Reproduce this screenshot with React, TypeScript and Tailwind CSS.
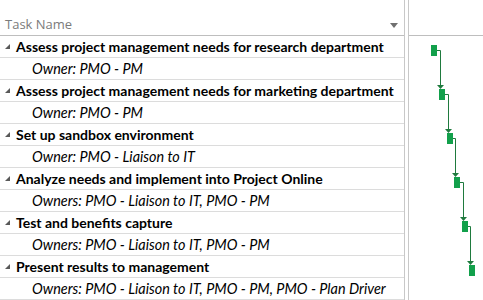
import React from 'react';

interface Task {
  name: string;
  owners: string;
}

const tasks: Task[] = [
  { name: 'Assess project management needs for research department', owners: 'Owner: PMO - PM' },
  { name: 'Assess project management needs for marketing department', owners: 'Owner: PMO - PM' },
  { name: 'Set up sandbox environment', owners: 'Owner: PMO - Liaison to IT' },
  { name: 'Analyze needs and implement into Project Online', owners: 'Owners: PMO - Liaison to IT, PMO - PM' },
  { name: 'Test and benefits capture', owners: 'Owners: PMO - Liaison to IT, PMO - PM' },
  { name: 'Present results to management', owners: 'Owners: PMO - Liaison to IT, PMO - PM, PMO - Plan Driver' },
];

// bar x positions inside the gantt pane (pane starts at x=409)
const barX = [22, 30, 38, 45, 53, 60];

function CollapseIcon() {
  return (
    <svg className="w-[5px] h-[5px] shrink-0" viewBox="0 0 5 5">
      <polygon points="5,0 5,5 0,5" fill="#595959" />
    </svg>
  );
}

function Gantt() {
  const bars = barX.map((x, i) => ({ x, y: 9 + i * 44 }));
  return (
    <svg className="block" width="74" height="264" viewBox="0 0 74 264">
      {bars.slice(0, -1).map((b, i) => {
        const next = bars[i + 1];
        const lx = next.x + 1.5;
        return (
          <g key={i}>
            <path
              d={`M${b.x + 6} ${b.y + 5.5} H${lx} V${next.y - 3}`}
              fill="none"
              stroke="#1f7a3e"
              strokeWidth="1"
            />
            <polygon
              points={`${lx - 3.5},${next.y - 4} ${lx + 3.5},${next.y - 4} ${lx},${next.y}`}
              fill="#1f7a3e"
            />
          </g>
        );
      })}
      {bars.map((b, i) => (
        <rect key={i} x={b.x} y={b.y} width="6" height="11" fill="#12a04b" />
      ))}
    </svg>
  );
}

export default function App() {
  return (
    <div className="w-[483px] h-[300px] bg-white flex overflow-hidden font-['Lato',sans-serif]">
      <div className="w-[405px] shrink-0 border-r border-[#c8c8c8] flex flex-col">
        <div className="h-[36px] shrink-0 border-b border-[#bebebe] flex items-end justify-between pb-[3px] pl-[5px] pr-[6px]">
          <span className="text-[13px] text-[#7b7b7b] font-['Open_Sans',sans-serif] leading-none mb-[1px]">Task Name</span>
          <svg className="w-[8px] h-[5px] mb-[4px]" viewBox="0 0 8 5">
            <polygon points="0,0 8,0 4,5" fill="#707070" />
          </svg>
        </div>
        {tasks.map((t) => (
          <React.Fragment key={t.name}>
            <div className="h-[22px] shrink-0 border-b border-[#dcdcdc] flex items-center pl-[5px] gap-[6px]">
              <CollapseIcon />
              <span className="text-[14px] font-bold text-black whitespace-nowrap">{t.name}</span>
            </div>
            <div className="h-[22px] shrink-0 border-b border-[#dcdcdc] flex items-center pl-[32px]">
              <span className="text-[14.4px] italic text-black whitespace-nowrap">{t.owners}</span>
            </div>
          </React.Fragment>
        ))}
      </div>
      <div className="w-[3px] shrink-0" />
      <div className="flex-1 border-l border-[#c8c8c8] flex flex-col">
        <div className="h-[36px] shrink-0 border-b border-[#bebebe]" />
        <Gantt />
      </div>
    </div>
  );
}
